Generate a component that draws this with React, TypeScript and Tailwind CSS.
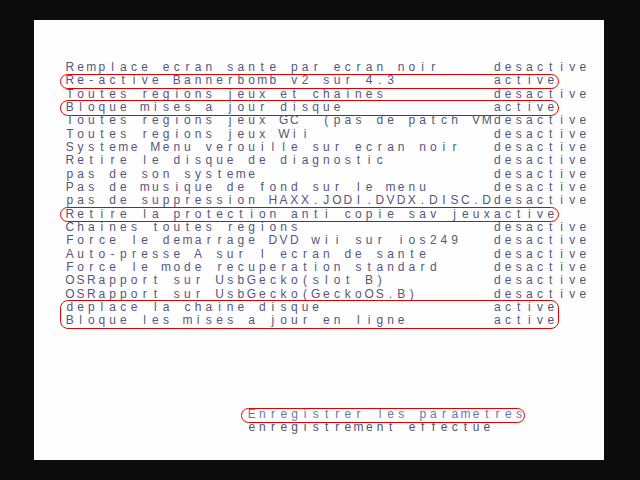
import React from 'react'

type Row = { label: string; status: string; ring?: boolean }

const rows: Row[] = [
  { label: 'Remplace ecran sante par ecran noir', status: 'desactive' },
  { label: 'Re-active Bannerbomb v2 sur 4.3', status: 'active', ring: true },
  { label: 'Toutes regions jeux et chaines', status: 'desactive' },
  { label: 'Bloque mises a jour disque', status: 'active', ring: true },
  { label: 'Toutes regions jeux GC  (pas de patch VM', status: 'desactive' },
  { label: 'Toutes regions jeux Wii', status: 'desactive' },
  { label: 'Systeme Menu verouille sur ecran noir', status: 'desactive' },
  { label: 'Retire le disque de diagnostic', status: 'desactive' },
  { label: 'pas de son systeme', status: 'desactive' },
  { label: 'Pas de musique de fond sur le menu', status: 'desactive' },
  { label: 'pas de suppression HAXX.JODI.DVDX.DISC.D', status: 'desactive' },
  { label: 'Retire la protection anti copie sav jeux', status: 'active', ring: true },
  { label: 'Chaines toutes regions', status: 'desactive' },
  { label: 'Force le demarrage DVD wii sur ios249', status: 'desactive' },
  { label: 'Auto-presse A sur l ecran de sante', status: 'desactive' },
  { label: 'Force le mode recuperation standard', status: 'desactive' },
  { label: 'OSRapport sur UsbGecko(slot B)', status: 'desactive' },
  { label: 'OSRapport sur UsbGecko(GeckoOS.B)', status: 'desactive' },
]

// last two rows share one outline
const grouped: Row[] = [
  { label: 'deplace la chaine disque', status: 'active' },
  { label: 'Bloque les mises a jour en ligne', status: 'active' },
]

// glyphs sit centred in fixed cells, like the console font
function Line({ text, className = '' }: { text: string; className?: string }) {
  return (
    <div className={`flex h-[13.33px] leading-[13.33px] whitespace-pre ${className}`}>
      {[...text].map((c, i) => (
        <span key={i} className="w-[10.7px] shrink-0 text-center">
          {c}
        </span>
      ))}
    </div>
  )
}

function Ring({ tight = false }: { tight?: boolean }) {
  return (
    <div
      className={`absolute left-[-5px] top-[-0.5px] bottom-[-1.5px] rounded-[8px] border-[1.5px] border-[#e40000] ${
        tight ? 'right-[-1px]' : 'right-[-3px]'
      }`}
    />
  )
}

export default function App() {
  return (
    <div className="w-[640px] h-[480px] bg-[#0c0c0c] pt-[20px] pl-[34px] overflow-hidden">
      <div
        className="w-[570px] h-[440px] bg-[#fefefe] pt-[41px] pl-[30.5px] text-[12px] text-[#56567c]"
        style={{ fontFamily: '"Liberation Sans", Arial, sans-serif' }}
      >
        {rows.map((r, i) => (
          <div key={i} className="relative w-fit">
            <Line text={r.label.padEnd(40) + r.status} />
            {r.ring && <Ring />}
          </div>
        ))}
        <div className="relative w-fit">
          {grouped.map((r, i) => (
            <Line key={i} text={r.label.padEnd(40) + r.status} />
          ))}
          <Ring />
        </div>

        <div className="h-[80.5px]" />

        <div className="pl-[181.9px]">
          <div className="relative w-fit">
            <Line text="Enregistrer les parametres" className="text-[#6a76aa]" />
            <Ring tight />
          </div>
          <Line text="enregistrement effectue" className="text-[#54506e]" />
        </div>
      </div>
    </div>
  )
}
